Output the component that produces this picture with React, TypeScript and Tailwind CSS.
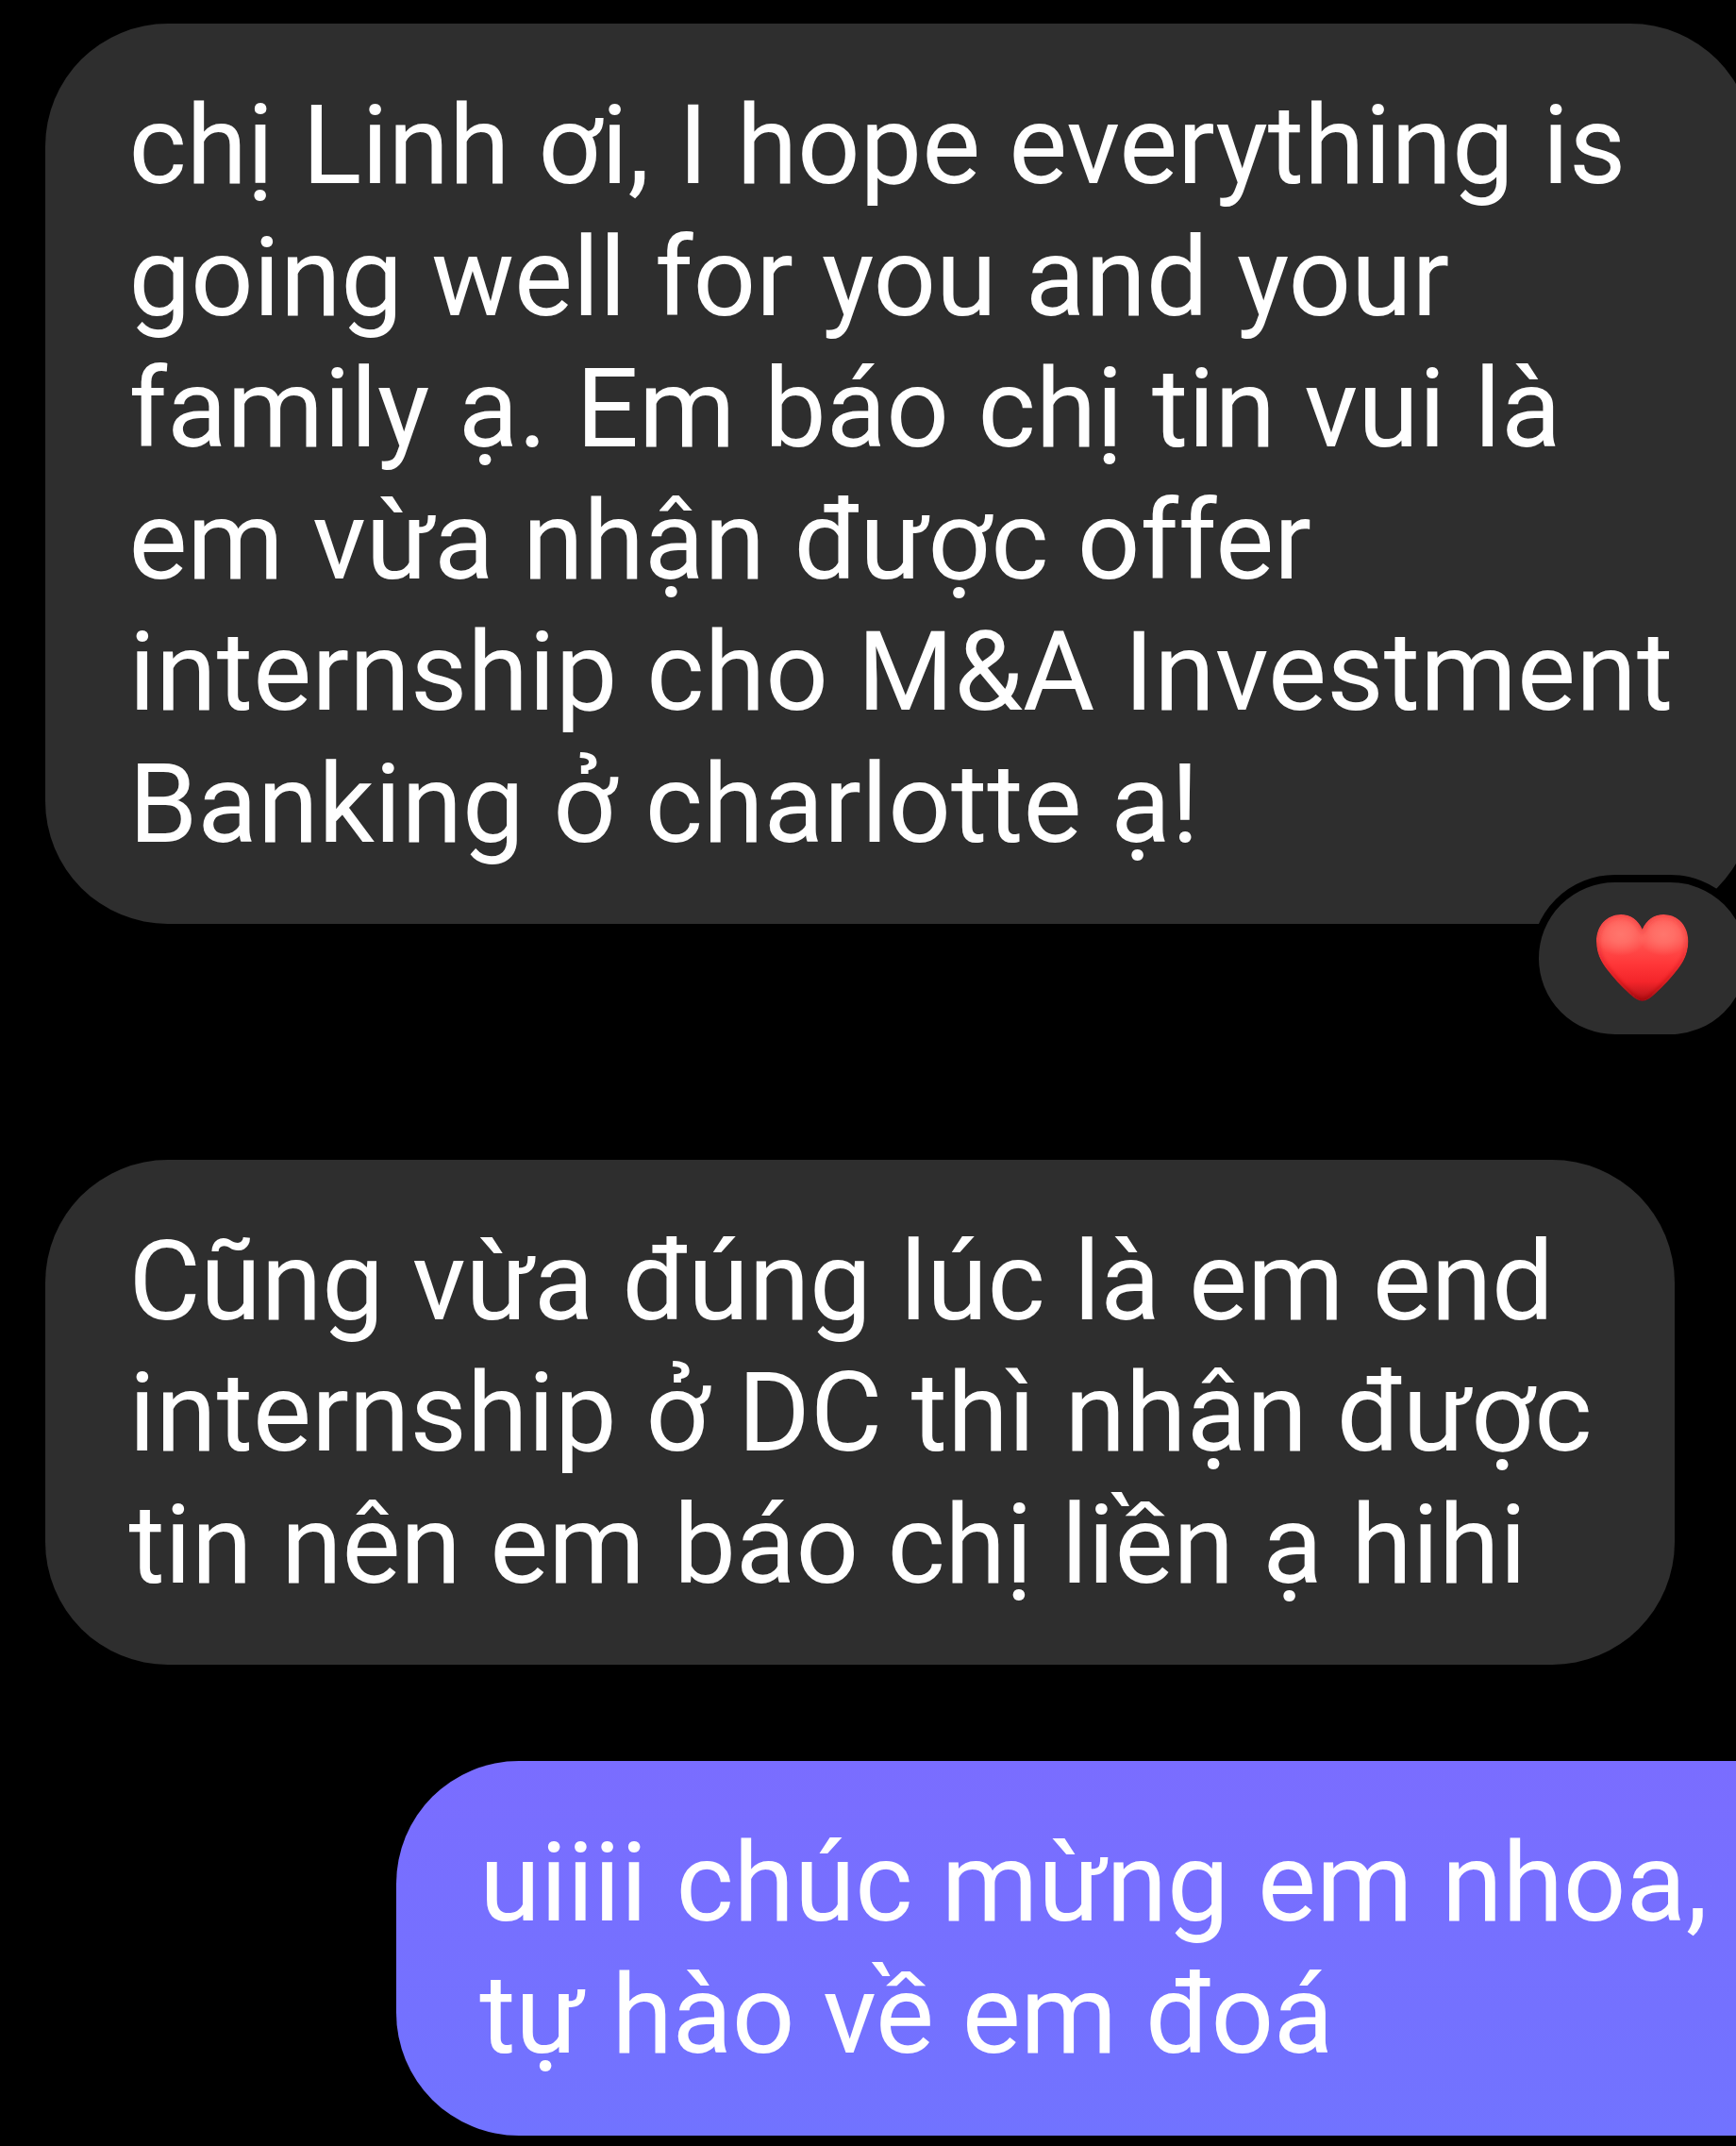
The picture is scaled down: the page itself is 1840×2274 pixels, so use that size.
import React from "react";

type Line = { text: string; tracking: string };

function Lines({ lines }: { lines: Line[] }) {
  return (
    <div className="whitespace-nowrap font-['Roboto',sans-serif] text-[117px] leading-[139.5px] text-white [word-spacing:1.5px]">
      {lines.map((l) => (
        <p key={l.text} className={l.tracking}>
          {l.text}
        </p>
      ))}
    </div>
  );
}

const heartPath =
  "M48.7 15.7C44 5.5 36.5 0 26 0C11 0 0 12 0 28.5C0 40 4 49 11 58C18 67 26 76 35.5 84.5C40.5 89 44.5 91.7 48.7 91.7C52.9 91.7 56.9 89 61.9 84.5C71.4 76 79.4 67 86.4 58C93.4 49 97.4 40 97.4 28.5C97.4 12 86.4 0 71.4 0C60.9 0 53.4 5.5 48.7 15.7Z";

function Heart() {
  return (
    <svg width="97.4" height="92" viewBox="0 0 97.4 92" className="mt-[-2px]">
      <defs>
        <linearGradient id="base" x1="0" y1="0" x2="0" y2="1">
          <stop offset="0" stopColor="#ff5450" />
          <stop offset="0.3" stopColor="#ff5551" />
          <stop offset="0.58" stopColor="#ff3638" />
          <stop offset="0.78" stopColor="#f3252a" />
          <stop offset="1" stopColor="#b01016" />
        </linearGradient>
        <radialGradient id="shine">
          <stop offset="0" stopColor="#ff766d" />
          <stop offset="0.4" stopColor="#ff766d" stopOpacity="0.75" />
          <stop offset="1" stopColor="#ff766d" stopOpacity="0" />
        </radialGradient>
        <linearGradient id="rim" x1="0" y1="0" x2="0" y2="1">
          <stop offset="0" stopColor="#e02a2c" stopOpacity="0.45" />
          <stop offset="0.5" stopColor="#c8161c" stopOpacity="0.6" />
          <stop offset="1" stopColor="#98080e" stopOpacity="0.9" />
        </linearGradient>
        <clipPath id="shape">
          <path d={heartPath} />
        </clipPath>
        <filter id="soft" x="-20%" y="-20%" width="140%" height="140%">
          <feGaussianBlur stdDeviation="2.5" />
        </filter>
      </defs>
      <g clipPath="url(#shape)">
        <path d={heartPath} fill="url(#base)" />
        <ellipse cx="26" cy="21" rx="28" ry="23" fill="url(#shine)" />
        <ellipse cx="71.4" cy="21" rx="28" ry="23" fill="url(#shine)" />
        <path d={heartPath} fill="none" stroke="url(#rim)" strokeWidth="4" filter="url(#soft)" />
      </g>
    </svg>
  );
}

export default function App() {
  return (
    <main className="flex h-[2274px] w-[1840px] flex-col items-start overflow-hidden bg-black pt-[25px]">
      <section className="relative ml-[48.4px] h-[953.6px] w-[1809.6px] shrink-0 rounded-[130px] bg-[#2e2e2e] pl-[88px] pt-[60px]">
        <Lines
          lines={[
            { text: "chị Linh ơi, I hope everything is", tracking: "tracking-[-0.17px]" },
            { text: "going well for you and your", tracking: "tracking-[-0.13px]" },
            { text: "family ạ. Em báo chị tin vui là", tracking: "tracking-[-0.05px]" },
            { text: "em vừa nhận được offer", tracking: "tracking-[-0.1px]" },
            { text: "internship cho M&A Investment", tracking: "tracking-[0.16px]" },
            { text: "Banking ở charlotte ạ!", tracking: "tracking-[0.02px]" },
          ]}
        />
        <div className="absolute left-[1574.6px] top-[902.4px] flex h-[177px] w-[236px] items-center justify-center rounded-full border-8 border-black bg-[#2e2e2e]">
          <Heart />
        </div>
      </section>
      <section className="ml-[48.4px] mt-[250px] h-[535.8px] w-[1726.3px] shrink-0 rounded-[130px] bg-[#2e2e2e] pl-[88px] pt-[60px]">
        <Lines
          lines={[
            { text: "Cũng vừa đúng lúc là em end", tracking: "tracking-[-0.17px]" },
            { text: "internship ở DC thì nhận được", tracking: "tracking-[0.09px]" },
            { text: "tin nên em báo chị liền ạ hihi", tracking: "tracking-[-0.09px]" },
          ]}
        />
      </section>
      <section className="ml-[420.3px] mt-[102.1px] h-[396.8px] w-[1700px] shrink-0 rounded-[130px] bg-linear-to-b from-[#7a6dff] to-[#7173ff] pl-[88px] pt-[60px]">
        <Lines
          lines={[
            { text: "uiiii chúc mừng em nhoa,", tracking: "tracking-[-0.11px]" },
            { text: "tự hào về em đoá", tracking: "tracking-[-0.35px]" },
          ]}
        />
      </section>
    </main>
  );
}
